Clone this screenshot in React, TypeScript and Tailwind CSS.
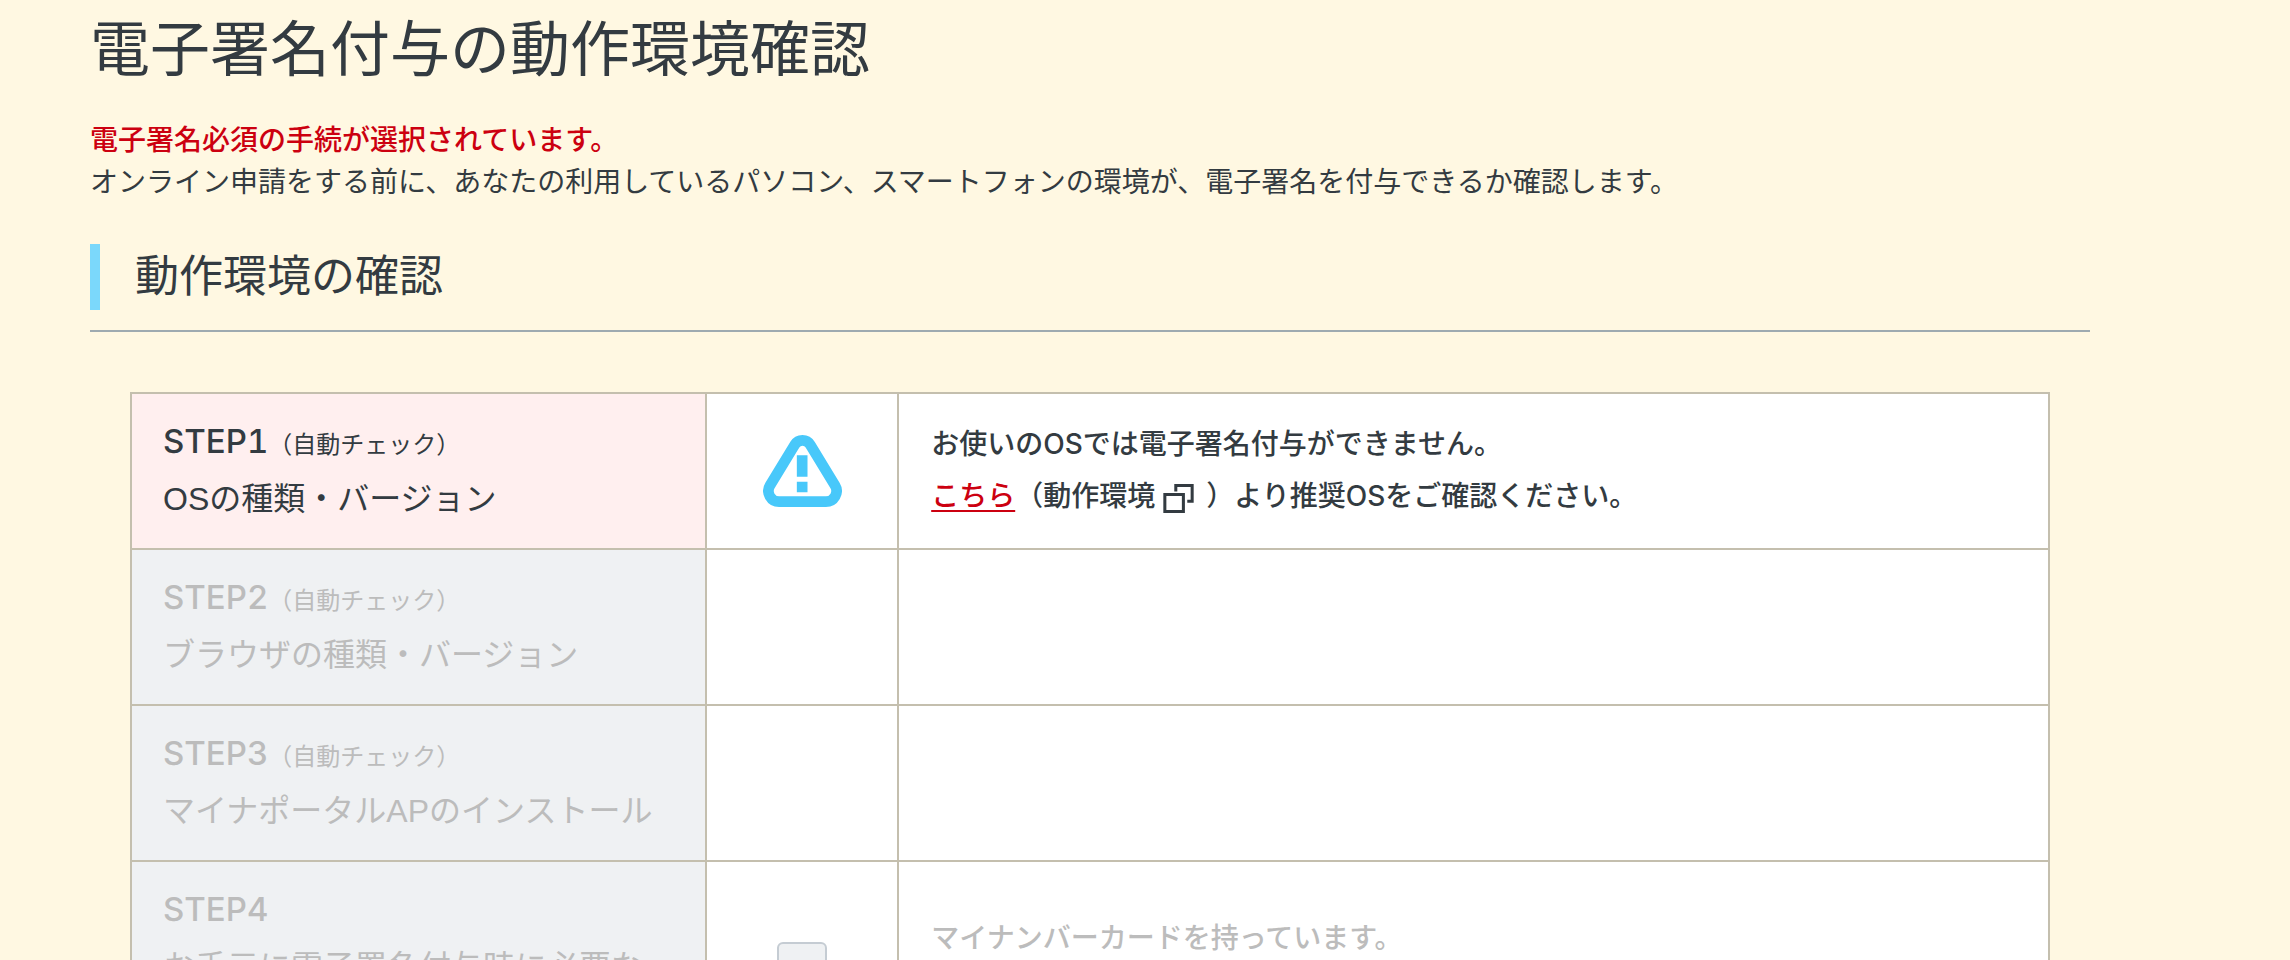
import type { ReactNode } from "react";

function WarningIcon() {
  return (
    <svg
      role="img"
      aria-label="注意"
      viewBox="192 197 236 216"
      className="mx-auto block h-[72px] w-[79px] text-[#48c8fa]"
    >
      <path
        d="M286.8 226.3A27 27 0 0 1 333.2 226.3L407.6 348.7A32 32 0 0 1 380 397H240A32 32 0 0 1 212.4 348.7Z"
        fill="none"
        stroke="currentColor"
        strokeWidth="32"
      />
      <path d="M293 258h32v64h-32zM293 337h32v32h-32z" fill="currentColor" />
    </svg>
  );
}

function NewWindowIcon() {
  return (
    <svg
      aria-hidden="true"
      viewBox="0 0 90 86"
      className="ml-2 mr-3 inline-block h-[29px] w-[31px] align-[-7px]"
      fill="none"
      stroke="currentColor"
      strokeWidth="9"
    >
      <path d="M4.5 31h55v50.5h-55z" />
      <path d="M37 22V4.5h48.5V51H71" />
    </svg>
  );
}

function Latin({ children }: { children: ReactNode }) {
  return <span className="font-[Inter,sans-serif] leading-none font-medium">{children}</span>;
}

type StepProps = {
  label: string;
  note?: string;
  title: string;
  active?: boolean;
  status?: ReactNode;
  children?: ReactNode;
  tall?: boolean;
};

function StepRow({ label, note, title, active, status, children, tall }: StepProps) {
  const tone = active ? "bg-[#ffefef]" : "bg-[#eff1f3] text-[#bcbcbc]";
  const cell = "border-2 border-[#c4bfae] py-5";
  return (
    <tr className={tall ? "h-[212px]" : ""}>
      <th
        scope="row"
        className={`${cell} ${tone} px-[31px] text-left align-top text-[32px] leading-[57px] font-normal`}
      >
        <span className="block">
          <span className="text-[33px] leading-none tabular-nums">
            <Latin>{label}</Latin>
          </span>
          {note && <span className="text-2xl leading-none">{note}</span>}
        </span>
        <span className="block">{title}</span>
      </th>
      <td className={`${cell} bg-white px-8 align-middle`}>{status}</td>
      <td
        className={`${cell} bg-white px-8 align-middle text-[28px] leading-[52px] font-medium ${
          active ? "" : "text-[#bcbcbc]"
        }`}
      >
        {children}
      </td>
    </tr>
  );
}

export default function App() {
  return (
    <div className="h-screen overflow-hidden bg-[#fff8e2] font-['Liberation_Sans','Noto_Sans_CJK_JP',sans-serif] text-[#333b41]">
      <main className="ml-[90px] mr-[200px] pt-1.5" lang="ja">
        <h1 className="text-6xl leading-[90px]">電子署名付与の動作環境確認</h1>
        <div className="mt-6 text-[28px] leading-[42px]">
          <p className="font-medium text-[#cc0010]">電子署名必須の手続が選択されています。</p>
          <p>
            オンライン申請をする前に、あなたの利用しているパソコン、スマートフォンの環境が、電子署名を付与できるか確認します。
          </p>
        </div>
        <div className="mt-10 border-b-2 border-[#9eaab0] pb-5">
          <h2 className="border-l-10 border-[#7bd8fb] pl-[35px] text-[44px] leading-[66px]">
            動作環境の確認
          </h2>
        </div>
        <div className="mt-[60px] px-10">
          <table className="w-full table-fixed border-collapse">
            <colgroup>
              <col className="w-[30%]" />
              <col className="w-[10%]" />
              <col className="w-[60%]" />
            </colgroup>
            <tbody>
              <StepRow
                active
                label="STEP1"
                note="（自動チェック）"
                title="OSの種類・バージョン"
                status={<WarningIcon />}
              >
                <p>
                  お使いの<Latin>OS</Latin>では電子署名付与ができません。
                </p>
                <p>
                  <a href="#environment" className="text-[#cc0010] underline underline-offset-4">
                    こちら
                  </a>
                  （動作環境
                  <NewWindowIcon />
                  ）より推奨<Latin>OS</Latin>をご確認ください。
                </p>
              </StepRow>
              <StepRow label="STEP2" note="（自動チェック）" title="ブラウザの種類・バージョン" />
              <StepRow label="STEP3" note="（自動チェック）" title="マイナポータルAPのインストール" />
              <StepRow
                tall
                label="STEP4"
                title="お手元に電子署名付与時に必要な"
                status={
                  <input
                    id="has-card"
                    type="checkbox"
                    disabled
                    className="mx-auto block size-[50px] appearance-none rounded-md border-2 border-[#c5ccd3] bg-[#eff1f3]"
                  />
                }
              >
                <label htmlFor="has-card" className="block pb-14">
                  マイナンバーカードを持っています。
                </label>
              </StepRow>
            </tbody>
          </table>
        </div>
      </main>
    </div>
  );
}
